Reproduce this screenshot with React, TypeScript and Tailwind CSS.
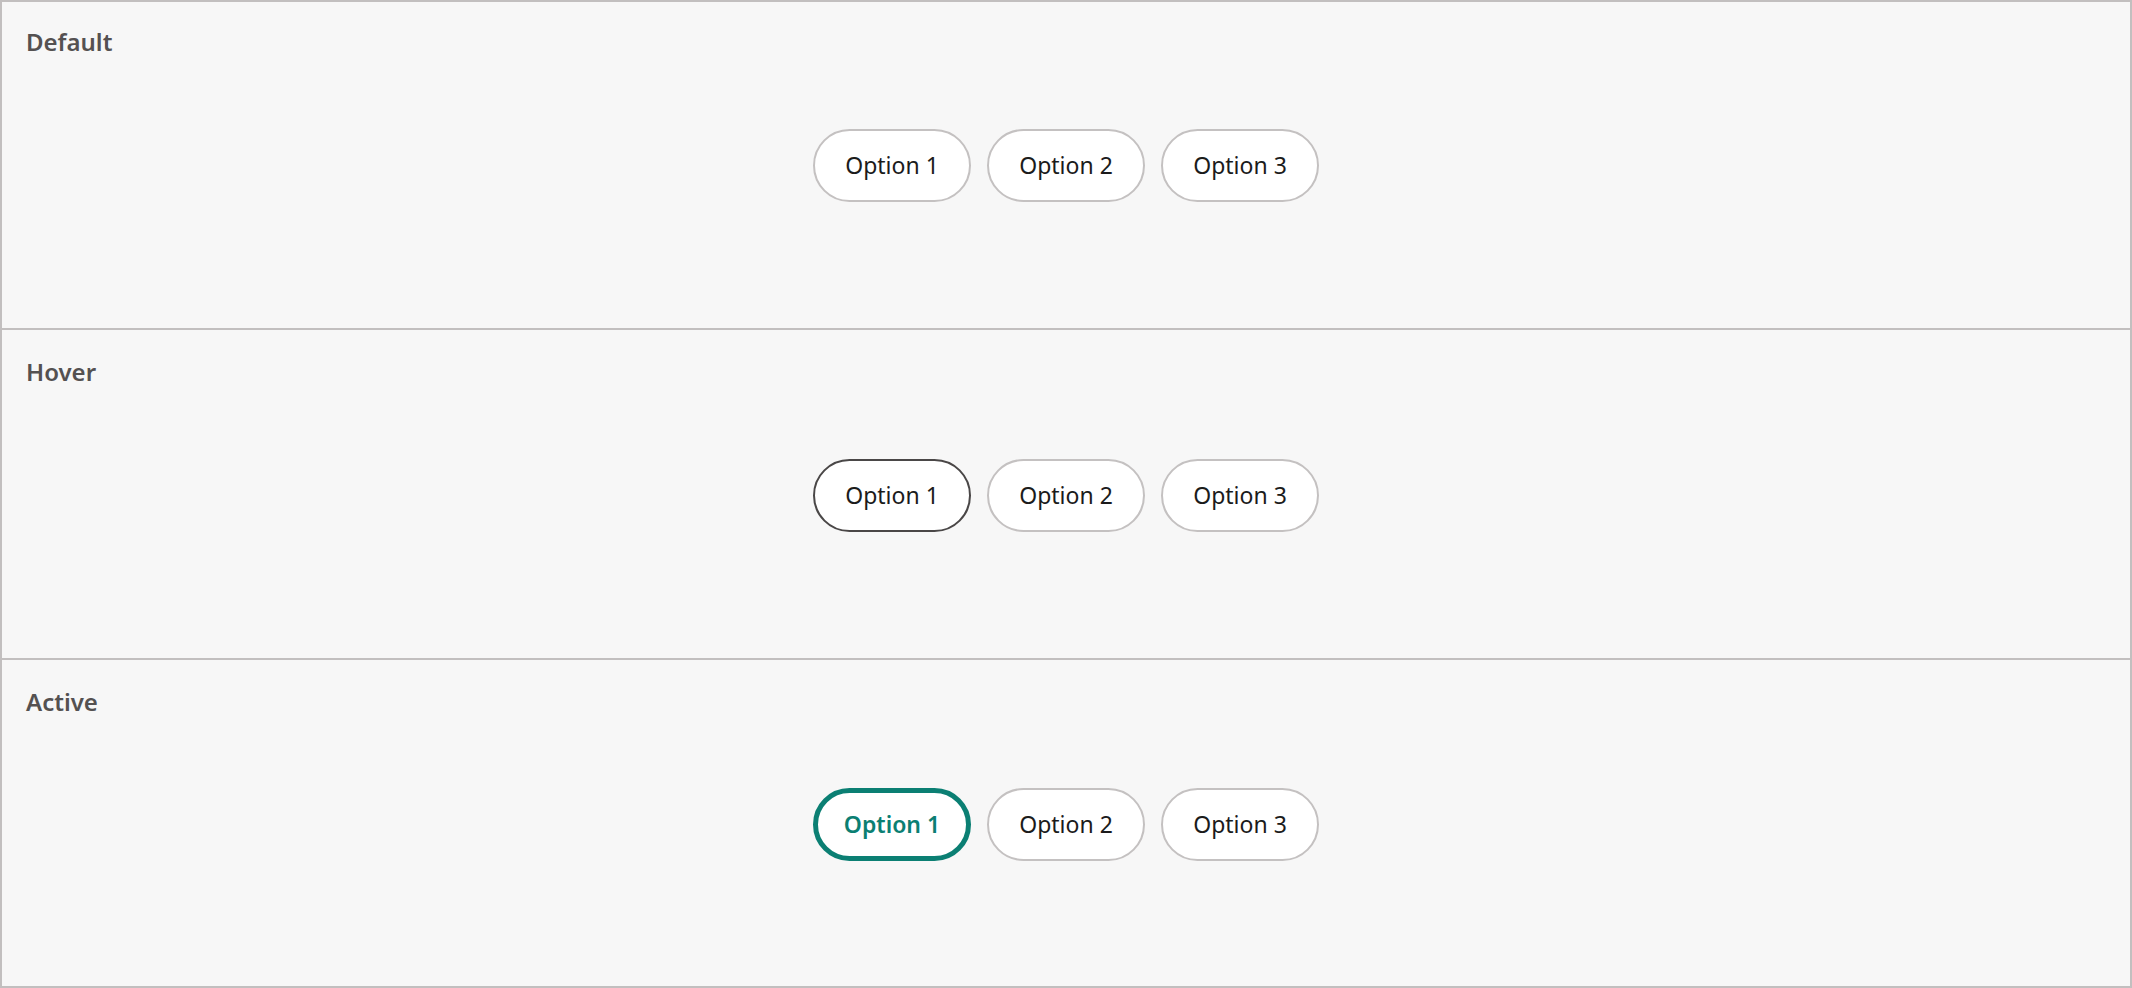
import React from "react";

type State = "default" | "hover" | "active";

const sections: { title: string; state: State; h: string }[] = [
  { title: "Default", state: "default", h: "h-[328px] border-b-2 pt-[22px]" },
  { title: "Hover", state: "hover", h: "h-[330px] border-b-2 pt-[24px]" },
  { title: "Active", state: "active", h: "flex-1 pt-[24px]" },
];

function Chip({ label, state }: { label: string; state: State }) {
  if (state === "active") {
    return (
      <button className="w-[158px] h-[73px] rounded-full bg-white border-[5px] border-[#0b7f73] text-[23px] font-semibold text-[#0b7f73] flex items-center justify-center">
        {label}
      </button>
    );
  }
  return (
    <button
      className={`w-[158px] h-[73px] rounded-full bg-white border-2 text-[23px] text-[#1b1b1b] flex items-center justify-center ${
        state === "hover" ? "border-[#4a4747]" : "border-[#c4c1c1]"
      }`}
    >
      {label}
    </button>
  );
}

export default function App() {
  return (
    <div
      className="w-[2132px] h-[988px] bg-[#f7f7f7] border-2 border-[#c2bfbf] flex flex-col"
      style={{ fontFamily: '"Noto Sans", "Open Sans", sans-serif' }}
    >
      {sections.map((s) => (
        <section
          key={s.title}
          className={`${s.h} border-[#c2bfbf] flex flex-col px-6 pb-[22px]`}
        >
          <h2 className="h-[36px] text-[24px] leading-[36px] font-semibold text-[#545151]">
            {s.title}
          </h2>
          <div className="flex-1 flex items-center justify-center gap-4">
            {["Option 1", "Option 2", "Option 3"].map((o, j) => (
              <Chip key={o} label={o} state={j === 0 ? s.state : "default"} />
            ))}
          </div>
          <div className="h-[36px]" />
        </section>
      ))}
    </div>
  );
}
